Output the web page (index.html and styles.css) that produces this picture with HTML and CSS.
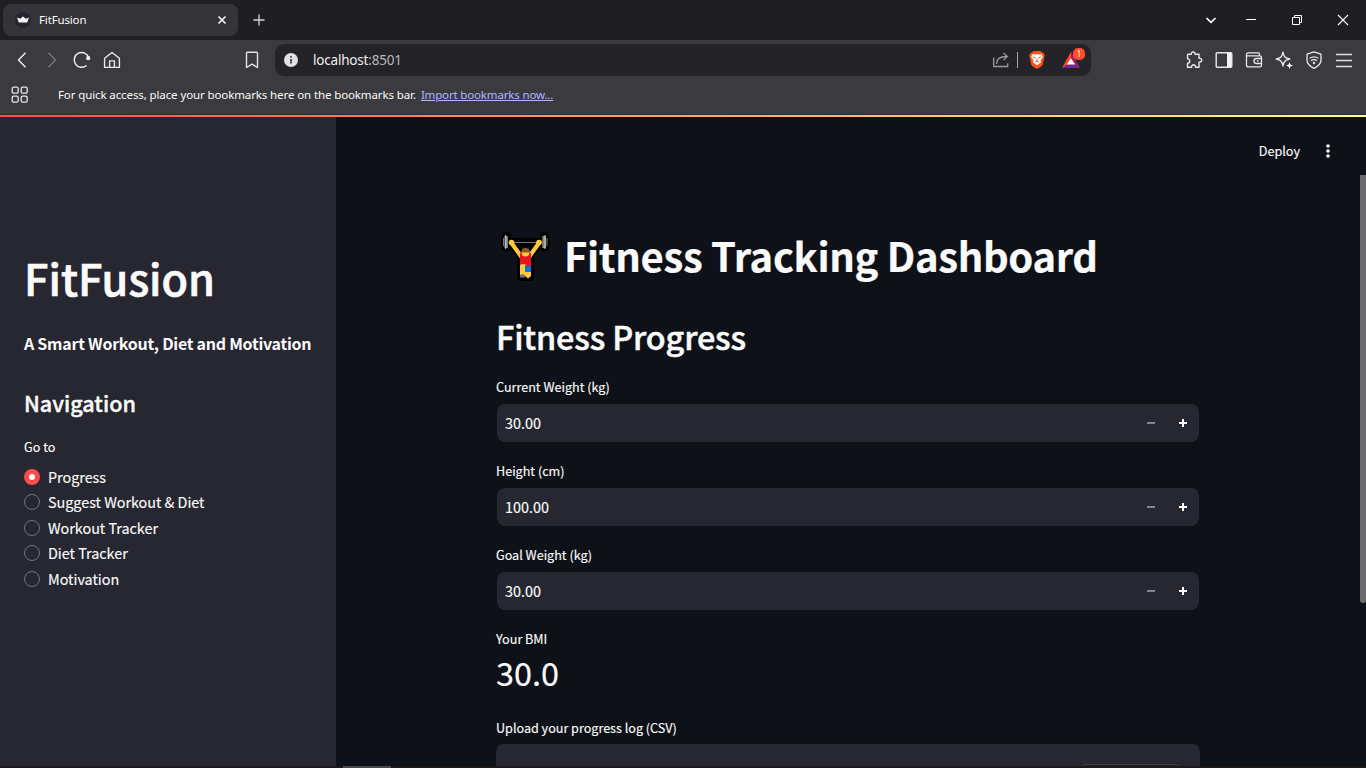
FILE: index.html
```html
<!DOCTYPE html>
<html lang="en">
<head>
<meta charset="utf-8">
<title>FitFusion</title>
<link rel="stylesheet" href="styles.css">
</head>
<body>
<header class="browser">
  <div class="tabstrip">
    <div class="tab">
      <svg class="favicon" width="16" height="16" viewBox="0 0 16 16"><circle cx="8" cy="8" r="8" fill="#262730"/><path d="M2 5.500l3.200 1.300L8 4.500l2.800 2.300L14 5.500l-1.800 5.100H3.800z" fill="#f4f4f4"/></svg>
      <span class="tab-title">FitFusion</span>
      <svg class="tab-close" width="10" height="10" viewBox="0 0 10 10"><path d="M1.500 1.500l7 7m0-7l-7 7" stroke="#fff" stroke-width="1.5"/></svg>
    </div>
    <svg class="new-tab" width="12" height="12" viewBox="0 0 12 12"><path d="M6 .5v11M.5 6h11" stroke="#d8d8dc" stroke-width="1.3"/></svg>
    <div class="window-controls">
      <svg width="16" height="16" viewBox="0 0 16 16"><path d="M3.500 6l4.500 4.400L12.500 6" fill="none" stroke="#fff" stroke-width="1.7"/></svg>
      <svg width="16" height="16" viewBox="0 0 16 16"><path d="M3 7.500h10" stroke="#fff"/></svg>
      <svg width="16" height="16" viewBox="0 0 16 16"><path d="M3.500 5.500h7v7h-7zM5.500 5.500v-2h7v7h-2" fill="none" stroke="#fff"/></svg>
      <svg width="16" height="16" viewBox="0 0 16 16"><path d="M3 3l10 10m0-10L3 13" stroke="#fff" stroke-width="1.1"/></svg>
    </div>
  </div>
  <div class="toolbar">
    <div class="nav-icons">
      <svg width="20" height="20" viewBox="0 0 20 20"><path d="M13.500 2.800L6.500 10l7 7.200" fill="none" stroke="#f2f2f4" stroke-width="1.4"/></svg>
      <svg width="20" height="20" viewBox="0 0 20 20"><path d="M6.500 2.800L13.500 10l-7 7.200" fill="none" stroke="#77767b" stroke-width="1.4"/></svg>
      <svg width="20" height="20" viewBox="0 0 20 20"><path d="M14.600 15.400A7.400 7.400 0 1 1 16.700 7.700" fill="none" stroke="#f2f2f4" stroke-width="1.4"/><circle cx="16.200" cy="8.200" r="2.100" fill="#f2f2f4"/></svg>
      <svg width="20" height="20" viewBox="0 0 20 20"><path d="M2.600 8.200L10 2.500l7.400 5.700v9.200H2.600zM7.600 17.400v-6.500h4.800v6.500" fill="none" stroke="#e8e8ea" stroke-width="1.4" stroke-linejoin="round"/></svg>
    </div>
    <svg class="bookmark" width="20" height="20" viewBox="0 0 20 20"><path d="M4.500 3.200q0-1 1-1h9q1 0 1 1v14.300L10 14.200l-5.500 3.300z" fill="none" stroke="#e4e4e6" stroke-width="1.4" stroke-linejoin="round"/></svg>
    <div class="address">
      <svg class="info" width="14" height="14" viewBox="0 0 14 14"><circle cx="7" cy="7" r="7" fill="#e0dfe5"/><path d="M7 6v4.500M7 3v1.700" stroke="#35343a" stroke-width="1.600"/></svg>
      <span class="url">localhost<span class="port">:8501</span></span>
      <svg class="share" width="18" height="18" viewBox="0 0 18 18"><path d="M1.700 6.500v9h14v-3.300M4.500 13c0-5 3.500-7.500 10-7.500M11.500 2l3.800 3.500-3.800 3.600" fill="none" stroke="#99989d" stroke-width="1.300"/></svg>
      <i class="divider"></i>
      <svg class="lion" width="18" height="20" viewBox="0 0 18 20"><path d="M5.500 1h7L14 2.500l1.500.3 1.300 2.700-.8 3-1.200 6-1.600 2L9 19l-4.200-2.500-1.600-2L2 8.500l-.8-3 1.300-2.700L4 2.500z" fill="#fb5412"/><path d="M4.500 4l2.800.6L9 4l1.700.6 2.800-.6 1.300 3-2.300 3.500.5 1.800L9 15.300l-4-3 .5-1.800L3.200 7z" fill="#fff"/><path d="M5 7l2.700 1M13 7l-2.700 1M9 8.500v2.500M7 12.200l2-.9 2 .9" stroke="#fb5412" stroke-width=".9" fill="none"/></svg>
      <span class="rewards"><svg width="20" height="18" viewBox="0 0 20 18"><path d="M10 1L1 17h18z" fill="#692b94"/><path d="M10 1L1 17l9-6z" fill="#ff4724"/><path d="M10 1l9 16-9-6z" fill="#9e1f63"/><path d="M10 7.300L5.800 13.500h8.400z" fill="#fff"/></svg><b class="badge">1</b></span>
    </div>
    <div class="extensions">
      <svg width="20" height="20" viewBox="0 0 20 20"><path d="M4 4.300h3.300c-.7-3 4.200-3 3.700 0h4v4c3.600-.5 3.600 4.200 0 3.900v5h-3.500c.6-3.200-4.500-3.200-3.800 0H3.500v-4c3-.2 3-4.500 0-4.500V5z" fill="none" stroke="#e8e8ea" stroke-width="1.400" stroke-linejoin="round"/></svg>
      <svg width="20" height="20" viewBox="0 0 20 20"><rect x="2.200" y="2.700" width="15.600" height="14.600" rx="1" fill="none" stroke="#e8e8ea" stroke-width="1.400"/><path d="M13 3h4.500v14H13z" fill="#f2f2f4"/></svg>
      <svg width="20" height="20" viewBox="0 0 20 20"><path d="M15.500 5.700V3.900q0-1-1-1H4a1.500 1.500 0 0 0 0 3h12q1.500 0 1.500 1.500v8q0 1.500-1.500 1.500H4.200q-1.700 0-1.700-1.700V4.400M17.500 8.500h-5a2.500 2.500 0 0 0 0 5h5M13 11h1.500" fill="none" stroke="#e8e8ea" stroke-width="1.300"/></svg>
      <svg width="20" height="20" viewBox="0 0 20 20"><path d="M9 2.200c.7 4.500 2 5.900 6.800 6.800-4.800 1-6.100 2.400-6.800 7-.8-4.600-2.200-6-6.800-7 4.600-.9 6-2.300 6.800-6.800z" fill="none" stroke="#e8e8ea" stroke-width="1.400" stroke-linejoin="round"/><path d="M15.500 12l.9 2.600 2.600.9-2.600.9-.9 2.600-.9-2.600-2.600-.9 2.600-.9z" fill="#fff"/></svg>
      <svg width="20" height="20" viewBox="0 0 20 20"><path d="M10 1.800l7 2.300v6q0 5-7 8.300-7-3.300-7-8.300v-6z" fill="none" stroke="#e8e8ea" stroke-width="1.300" stroke-linejoin="round"/><path d="M5.600 8.300q4.400-3 8.800 0M7 10.700q3-2 6 0" fill="none" stroke="#e8e8ea" stroke-width="1.300"/><circle cx="10" cy="13" r="1.200" fill="#e8e8ea"/></svg>
      <svg width="20" height="20" viewBox="0 0 20 20"><path d="M2 4.500h16M2 10.500h16M2 16.500h16" stroke="#e0e0e2" stroke-width="1.400"/></svg>
    </div>
  </div>
  <div class="bookmarks">
    <svg class="apps" width="18" height="18" viewBox="0 0 18 18"><g fill="none" stroke="#e8e8ea" stroke-width="1.300"><rect x="1.200" y="1.200" width="6" height="6" rx="1.500"/><rect x="10.200" y="1.200" width="6" height="6" rx="1.500"/><rect x="1.200" y="10.200" width="6" height="6" rx="1.500"/><rect x="10.200" y="10.200" width="6" height="6" rx="1.500"/></g></svg>
    <span class="bookmark-hint">For quick access, place your bookmarks here on the bookmarks bar.</span>
    <a class="bookmark-link">Import bookmarks now...</a>
  </div>
</header>
<div class="decoration"></div>
<div class="app">
  <aside class="sidebar">
    <h1 class="brand">FitFusion</h1>
    <p class="tagline">A Smart Workout, Diet and Motivation</p>
    <h2 class="nav-heading">Navigation</h2>
    <p class="label goto">Go to</p>
    <ul class="radios">
      <li><i class="radio on"></i><span>Progress</span></li>
      <li><i class="radio"></i><span>Suggest Workout &amp; Diet</span></li>
      <li><i class="radio"></i><span>Workout Tracker</span></li>
      <li><i class="radio"></i><span>Diet Tracker</span></li>
      <li><i class="radio"></i><span>Motivation</span></li>
    </ul>
  </aside>
  <main class="main">
    <div class="app-toolbar">
      <span class="deploy">Deploy</span>
      <svg width="6" height="16" viewBox="0 0 6 16"><g fill="#fafafa"><circle cx="3" cy="3" r="1.800"/><circle cx="3" cy="8" r="1.800"/><circle cx="3" cy="13" r="1.800"/></g></svg>
    </div>
    <div class="column">
      <div class="title-row">
        <svg class="lifter" width="50" height="52" viewBox="0 0 50 52">
          <g fill="none" stroke="#000" stroke-linecap="round" stroke-linejoin="round"><path d="M5.500 6v10M43.500 6v10" stroke-width="10"/><path d="M5 11.500h39M11 12l10 13M38 12L28 25" stroke-width="9"/><path d="M20 22h9v24h-9z" stroke-width="8" fill="#000"/></g>
          <path d="M8 11.500h34" stroke="#777" stroke-width="1.200"/>
          <path d="M10.500 12l10 14M38 12L28 26" stroke="#ffc83d" stroke-width="4.200"/>
          <circle cx="10.500" cy="11.500" r="2.800" fill="#ffc83d"/><circle cx="38" cy="11.500" r="2.800" fill="#ffc83d"/>
          <path d="M19 22h11v13H19z" fill="#e81224"/><path d="M19 35q0-2 3-2h2.500v11H19z" fill="#ffc83d"/><path d="M24 41h6v4l-3 2.500-3-2.500z" fill="#ffc83d"/><path d="M24 35h6v6h-6z" fill="#0078d7"/><path d="M19 46.500v-2q2-3 5 0v2z" fill="#777"/>
          <circle cx="24.500" cy="21.500" r="4" fill="#ffc83d"/><path d="M20.500 21.500a4 4.500 0 0 1 8 0z" fill="#8e562e"/>
          <path d="M3.500 5H7v12H3.500zM41.500 5H45v12h-3.500z" fill="#999"/><path d="M2.500 7v8M6.500 5v12M42 5v12M46 7v8" stroke="#777" stroke-width="1"/><path d="M4.500 4v14M44 4v14" stroke="#bbb" stroke-width="1"/>
        </svg>
        <h1 class="title">Fitness Tracking Dashboard</h1>
      </div>
      <h2 class="subtitle">Fitness Progress</h2>
      <div class="field"><p class="label">Current Weight (kg)</p><div class="number"><span class="value">30.00</span><i class="minus"></i><i class="plus"></i></div></div>
      <div class="field"><p class="label">Height (cm)</p><div class="number"><span class="value">100.00</span><i class="minus"></i><i class="plus"></i></div></div>
      <div class="field"><p class="label">Goal Weight (kg)</p><div class="number"><span class="value">30.00</span><i class="minus"></i><i class="plus"></i></div></div>
      <p class="label">Your BMI</p>
      <p class="metric">30.0</p>
      <p class="label upload-label">Upload your progress log (CSV)</p>
      <div class="dropzone"><div class="browse"></div></div>
    </div>
    <i class="scrollbar"></i>
  </main>
</div>
<footer class="edge"><i class="edge-mark"></i></footer>
</body>
</html>
```
FILE: styles.css
```css
* { box-sizing: border-box; margin: 0; padding: 0; }
html, body { width: 1366px; height: 768px; overflow: hidden; }
body { background: #0e1117; color: #fafafa; font-family: "Noto Sans CJK SC", "Noto Sans", sans-serif; display: flex; flex-direction: column; }
svg, i { display: block; flex: none; }
p, span, h1, h2, a { white-space: nowrap; }

.browser { height: 115px; flex: none; background: #3b3a3f; border-bottom: 1px solid #2e2d32; font-family: "Noto Sans", sans-serif; }
.tabstrip { height: 40px; background: #1f1e23; display: flex; align-items: center; padding-left: 3px; }
.tab { width: 235px; height: 32px; border-radius: 8px; background: #353439; display: flex; align-items: center; padding: 0 11px 0 12px; }
.tab-title { margin-left: 8px; padding-bottom: 2px; font-size: 11.500px; letter-spacing: -.15px; flex: 1; }
.new-tab { margin-left: 15px; }
.window-controls { margin-left: auto; display: flex; gap: 30px; padding-right: 15px; }
.window-controls svg:first-child { margin-right: -6px; }
.toolbar { height: 40px; display: flex; align-items: center; padding-left: 12px; }
.nav-icons, .extensions { display: flex; gap: 10px; }
.bookmark { margin-left: 120px; }
.address { margin-left: 13px; width: 816px; height: 32px; border-radius: 9px; background: #242328; display: flex; align-items: center; padding: 0 9px; }
.url { margin-left: 15px; font-size: 13.500px; letter-spacing: -.2px; flex: 1; color: #eeeef0; }
.port { color: #b8b7bc; }
.divider { width: 1px; height: 16px; margin: 0 10px 0 7px; background: #a6a5aa; }
.rewards { margin: 0 1px 0 15px; position: relative; }
.badge { position: absolute; right: -4px; top: -3px; width: 12px; height: 12px; border-radius: 5px; background: #ff4b2b; font-size: 8px; line-height: 12px; text-align: center; font-weight: 400; }
.extensions { margin-left: 93px; }
.bookmarks { height: 34px; display: flex; align-items: center; padding: 0 0 4px 11px; font-size: 11.500px; letter-spacing: -.11px; }
.bookmark-hint { margin-left: 29px; padding-bottom: 2px; }
.bookmark-link { margin-left: 5px; padding-bottom: 2px; letter-spacing: -.16px; color: #b4b5ff; text-decoration: underline; }

.decoration { height: 2px; flex: none; background: linear-gradient(90deg, #ff4b4b, #fffd80); }
.app { height: 649px; display: flex; flex: none; -webkit-text-stroke: .15px currentColor; }
.sidebar { width: 336px; background: #262730; padding: 132px 24px 0; }
.brand { font-size: 43.200px; line-height: 56px; font-weight: 500; -webkit-text-stroke: .700px currentColor; }
.tagline { margin-top: 28px; font-size: 16px; line-height: 20px; font-weight: 700; letter-spacing: -.26px; -webkit-text-stroke: 0; }
.nav-heading { margin-top: 35px; font-size: 21.600px; line-height: 30px; font-weight: 500; -webkit-text-stroke: .400px currentColor; }
.label { font-size: 12.600px; line-height: 20px; }
.goto { margin-top: 19px; }
.radios { list-style: none; margin-top: 7px; }
.radios li { height: 25.500px; display: flex; align-items: center; gap: 8px; font-size: 14.400px; line-height: 25px; }
.radios span { padding-bottom: 1.500px; letter-spacing: -.03px; }
.radio { width: 16px; height: 16px; border: 1px solid #72737b; border-radius: 50%; }
.radio.on { border: 5px solid #ff4b4b; background: #fafafa; }

.main { flex: 1; position: relative; overflow: hidden; }
.app-toolbar { height: 68px; display: flex; justify-content: flex-end; align-items: center; gap: 25px; padding-right: 35px; font-size: 12.600px; }
.deploy { padding-bottom: 2px; }
.column { width: 704px; margin-left: 160px; }
.title-row { height: 58px; margin-top: 43px; display: flex; align-items: flex-start; }
.lifter { margin: 3px 13px 0 5px; }
.title { font-size: 40px; line-height: 54px; font-weight: 700; letter-spacing: -.36px; -webkit-text-stroke: .200px currentColor; }
.subtitle { margin-top: 28px; font-size: 32.400px; line-height: 44px; font-weight: 500; letter-spacing: -.15px; -webkit-text-stroke: .500px currentColor; }
.field { height: 84px; }
.subtitle + .field { margin-top: 19px; }
.number { height: 38px; margin: 7px 1px 0; border-radius: 8px; background: #262730; display: flex; align-items: center; padding: 0 12px 0 8px; }
.value { font-size: 14.400px; line-height: 36px; flex: 1; }
.minus { width: 8px; height: 2px; background: #808495; }
.plus { width: 8px; height: 8px; margin-left: 24px; background: linear-gradient(#fff, #fff) center / 8px 2px no-repeat, linear-gradient(#fff, #fff) center / 2px 8px no-repeat; }
.metric { margin-top: -1px; font-size: 32.400px; line-height: 48px; }
.upload-label { margin-top: 22px; }
.dropzone { height: 80px; margin-top: 6px; border-radius: 8px; background: #262730; padding: 20px 18px; }
.browse { width: 103px; height: 40px; margin-left: auto; border: 1px solid #41434b; border-radius: 8px; background: #1b1d26; }
.scrollbar { position: absolute; right: 0; top: 58px; width: 6px; height: 428px; background: #6b6b6e; border-radius: 0 0 3px 3px; }
.edge { height: 2px; flex: none; background: #1c1918; padding-left: 343px; }
.edge-mark { width: 48px; height: 2px; background: #4a4848; }
```
